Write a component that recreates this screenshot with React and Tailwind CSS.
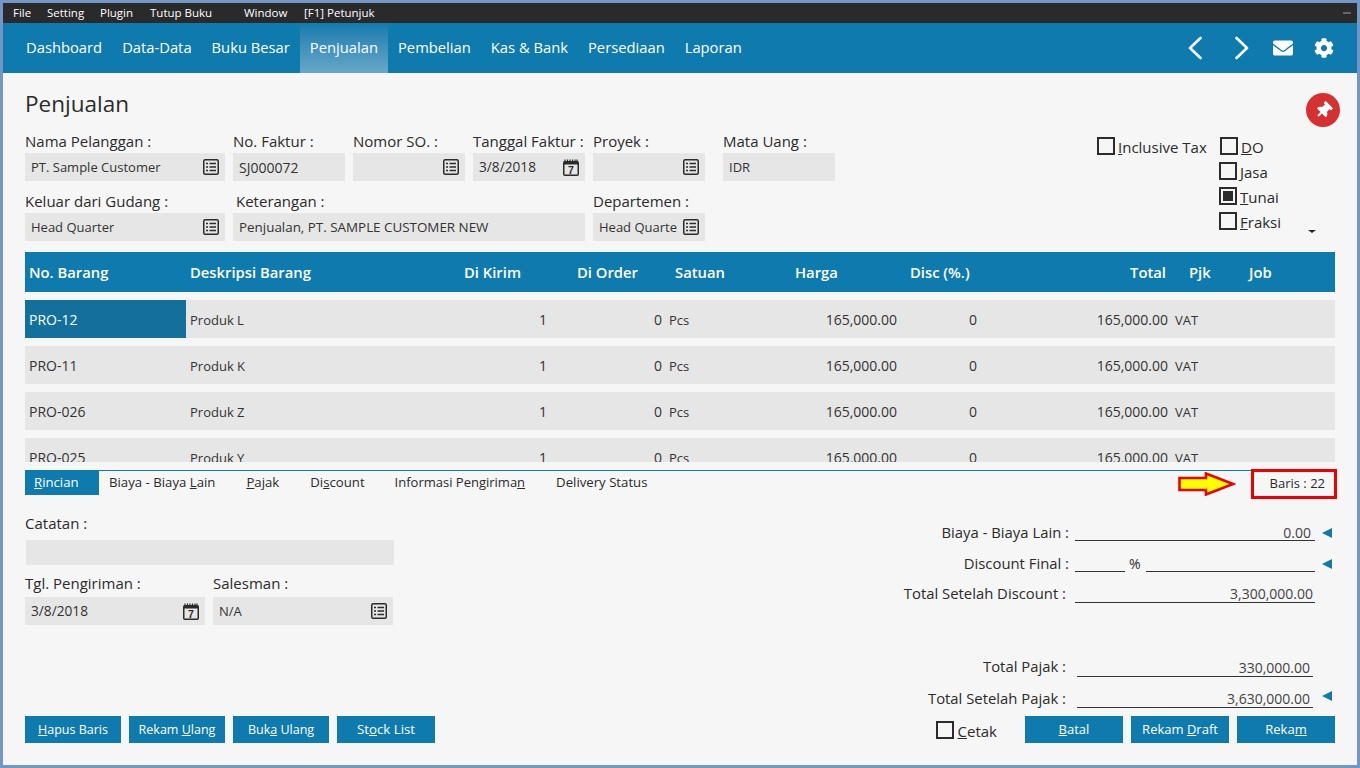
import { FaCog, FaEnvelope, FaThumbtack } from 'react-icons/fa';

const menuItems = [
  ['File', 'w-[34px]'],
  ['Setting', 'w-[53px]'],
  ['Plugin', 'w-[50px]'],
  ['Tutup Buku', 'w-[94px]'],
  ['Window', 'w-[60px]'],
  ['[F1] Petunjuk', 'w-[90px]'],
];
const navItems = ['Dashboard', 'Data-Data', 'Buku Besar', 'Penjualan', 'Pembelian', 'Kas & Bank', 'Persediaan', 'Laporan'];

const rows = [
  ['PRO-12', 'Produk L'],
  ['PRO-11', 'Produk K'],
  ['PRO-026', 'Produk Z'],
  ['PRO-025', 'Produk Y'],
];

function ListIcon() {
  return (
    <svg width="16" height="16" viewBox="0 0 16 16" className="shrink-0 text-[#2b2b2b]">
      <rect x="0.75" y="0.75" width="14.5" height="14.5" rx="1.5" fill="none" stroke="currentColor" strokeWidth="1.5" />
      <path d="M3 4.5h2M6.5 4.5h6.5M3 8h2M6.5 8h6.5M3 11.5h2M6.5 11.5h6.5" stroke="currentColor" strokeWidth="1.6" />
    </svg>
  );
}

function CalendarIcon() {
  return (
    <svg width="16" height="17" viewBox="0 0 16 17" className="shrink-0 text-[#2b2b2b]">
      <path d="M2 0.5v2M4.5 0.5v2M7 0.5v2M9.5 0.5v2M12 0.5v2M14 0.5v2" stroke="currentColor" strokeWidth="1.2" />
      <rect x="0.75" y="2.75" width="14.5" height="13.5" rx="1" fill="none" stroke="currentColor" strokeWidth="1.5" />
      <path d="M1 3h14v2.5H1z" fill="currentColor" />
      <text x="8" y="14.8" textAnchor="middle" fontSize="10.5" fontWeight="700" fill="currentColor" fontFamily="'Liberation Sans', sans-serif">7</text>
    </svg>
  );
}

function Chevron({ d }) {
  return (
    <svg width="14" height="24" viewBox="0 0 14 24" fill="none" stroke="currentColor" strokeWidth="2.6" strokeLinecap="round" strokeLinejoin="round">
      <path d={d} />
    </svg>
  );
}

function Field({ label, value, icon, className, labelClass = 'h-[21px] leading-[18px]', textClass = 'pt-[2px] text-[13px]' }) {
  return (
    <div className={className}>
      <div className={`whitespace-nowrap text-[15px] ${labelClass}`}>{label}</div>
      <div className="flex h-[28px] items-center justify-between bg-[#e6e6e6] px-[6px]">
        <span className={`overflow-hidden whitespace-nowrap text-[#333] ${textClass}`}>{value}</span>
        {icon === 'list' && <ListIcon />}
        {icon === 'cal' && <CalendarIcon />}
      </div>
    </div>
  );
}

function Check({ children, checked, className = '' }) {
  return (
    <div className={`flex h-[25px] items-center gap-[3px] text-[15px] ${className}`}>
      <span className="flex h-[18px] w-[18px] shrink-0 items-center justify-center border-2 border-[#2b2b2b]">
        {checked && <span className="h-[10px] w-[10px] bg-[#2b2b2b]" />}
      </span>
      <span className="pt-[3px]">{children}</span>
    </div>
  );
}

function ActionButton({ children, className = 'w-[96px] pt-[2px] text-[12.5px]' }) {
  return (
    <button type="button" className={`h-[27px] bg-[#0f7aae] text-white ${className}`}>
      {children}
    </button>
  );
}

function Triangle({ className = '' }) {
  return <span className={`h-0 w-0 border-y-[5px] border-r-[10px] border-y-transparent border-r-[#0f7aae] ${className}`} />;
}

function Summary({ label, value, arrow, labelClass = 'w-[1063px] leading-[19px]', lineClass = 'ml-[9px] w-[240px] pr-[2px] pt-[5px]' }) {
  return (
    <div className="flex h-[31px] items-end">
      <div className={`text-right text-[14.85px] ${labelClass}`}>{label}</div>
      <div className={`h-[24px] border-b border-[#333] text-right text-[14px] leading-[19px] text-[#444] ${lineClass}`}>{value}</div>
      {arrow}
    </div>
  );
}

export default function App() {
  return (
    <div
      className="flex h-screen flex-col overflow-hidden border-[3px] border-[#7396c4] bg-[#f6f6f6] text-[#2b2b2b]"
      style={{ fontFamily: "'Open Sans', 'Noto Sans', sans-serif" }}
    >
      {/* Window menu */}
      <div className="flex h-[20px] shrink-0 items-center bg-[#2a2a2a] pl-[10px] pr-[6px] text-[11.5px] text-white">
        {menuItems.map(([name, width]) => (
          <span key={name} className={`${width} whitespace-nowrap`}>
            {name}
          </span>
        ))}
        <span className="ml-auto h-[2px] w-[8px] bg-[#666]" />
      </div>

      {/* Main nav */}
      <nav className="flex h-[50px] shrink-0 items-stretch bg-[#0f7aae] pl-[13px] pr-[23px] text-[14.75px] text-white">
        {navItems.map((item) => (
          <span
            key={item}
            className={`flex items-center px-[10px] pb-[2px] ${item === 'Penjualan' ? 'bg-gradient-to-b from-[#0f7aae] to-[#66a8c9]' : ''}`}
          >
            {item}
          </span>
        ))}
        <div className="ml-auto flex items-center">
          <Chevron d="M12.5 2 L2 12 L12.5 22" />
          <span className="ml-[33px]"><Chevron d="M1.5 2 L12 12 L1.5 22" /></span>
          <FaEnvelope size={20} className="ml-[24px]" />
          <FaCog size={20} className="ml-[21px]" />
        </div>
      </nav>

      {/* Header form */}
      <section className="relative flex h-[179px] shrink-0 justify-between px-[22px]">
        <div>
          <h1 className="mt-[15px] h-[44px] text-[22.5px] leading-[32px]">Penjualan</h1>
          <div className="flex gap-[8px]">
            <Field className="w-[200px]" label="Nama Pelanggan :" value="PT. Sample Customer" icon="list" />
            <Field className="w-[112px]" label="No. Faktur :" value="SJ000072" textClass="text-[14px]" />
            <Field className="w-[112px]" label="Nomor SO. :" value="" icon="list" />
            <Field className="w-[112px]" label="Tanggal Faktur :" value="3/8/2018" icon="cal" textClass="text-[13.7px]" />
            <Field className="w-[112px]" label="Proyek :" value="" icon="list" />
            <Field className="ml-[10px] w-[112px]" label="Mata Uang :" value="IDR" />
          </div>
          <div className="mt-[11px] flex gap-[8px]">
            <Field className="w-[200px]" label="Keluar dari Gudang :" value="Head Quarter" icon="list" />
            <Field
              className="w-[352px]"
              labelClass="h-[21px] pl-[3px] leading-[18px]"
              label="Keterangan :"
              value="Penjualan, PT. SAMPLE CUSTOMER NEW"
              textClass="text-[13.4px]"
            />
            <Field className="w-[112px]" label="Departemen :" value="Head Quarte" icon="list" />
          </div>
        </div>

        <div className="flex flex-col items-end">
          <span className="mr-[-5px] mt-[20px] flex h-[34px] w-[34px] items-center justify-center rounded-full bg-[#d63031] text-white">
            <FaThumbtack size={17} className="rotate-45" />
          </span>
          <div className="mt-[6px] flex w-[238px]">
            <Check className="w-[122px]"><u>I</u>nclusive Tax</Check>
            <div>
              <Check className="ml-[1px]"><u>D</u>O</Check>
              <Check><u>J</u>asa</Check>
              <Check checked><u>T</u>unai</Check>
              <Check><u>F</u>raksi</Check>
            </div>
            <span className="ml-auto mr-[19px] mt-[97px] h-0 w-0 border-x-[4px] border-t-[3px] border-x-transparent border-t-[#222]" />
          </div>
        </div>
      </section>

      {/* Item table */}
      <section className="mx-[22px] mb-[8px] h-[210px] shrink-0 overflow-hidden">
        <div className="grid h-[40px] grid-cols-[161px_250px_89px_117px_149px_115px_164px_100px_75px_90px] items-center bg-[#0f7aae] text-[14.8px] font-semibold text-white">
          <span className="pl-[4px]">No. Barang</span>
          <span className="pl-[4px]">Deskripsi Barang</span>
          <span className="pr-[4px] text-right">Di Kirim</span>
          <span className="pr-[4px] text-right">Di Order</span>
          <span className="pl-[33px]">Satuan</span>
          <span className="pl-[4px]">Harga</span>
          <span className="pl-[4px]">Disc (%.)</span>
          <span className="pr-[4px] text-right">Total</span>
          <span className="pl-[19px]">Pjk</span>
          <span className="pl-[4px]">Job</span>
        </div>
        {rows.map(([code, name], i) => (
          <div
            key={code}
            className="mt-[8px] grid h-[38px] grid-cols-[161px_250px_115px_115px_120px_115px_80px_191px_163px] items-center bg-[#e6e6e6] text-[13px] text-[#333]"
          >
            <span className={`flex h-full items-center pl-[4px] text-[14px] ${i === 0 ? 'bg-[#136f9c] text-white' : ''}`}>{code}</span>
            <span className="pl-[4px] pt-[4px]">{name}</span>
            <span className="pr-[4px] text-right text-[14px]">1</span>
            <span className="pr-[4px] text-right text-[14px]">0</span>
            <span className="pl-[3px] pt-[4px]">Pcs</span>
            <span className="pr-[4px] text-right text-[14px]">165,000.00</span>
            <span className="pr-[4px] text-right text-[14px]">0</span>
            <span className="pr-[4px] text-right text-[14px]">165,000.00</span>
            <span className="pl-[3px] pt-[4px]">VAT</span>
          </div>
        ))}
      </section>

      {/* Tabs */}
      <div className="relative mx-[22px] flex h-[26px] shrink-0 items-start border-t border-[#0f7aae] text-[13.2px]">
        <span className="flex h-[24px] w-[74px] items-center bg-[#0f7aae] pl-[9px] text-white"><span><u>R</u>incian</span></span>
        <span className="ml-[10px] mt-[2px]">Biaya - Biaya <u>L</u>ain</span>
        <span className="ml-[31px] mt-[2px]"><u>P</u>ajak</span>
        <span className="ml-[31px] mt-[2px]">Di<u>s</u>count</span>
        <span className="ml-[30px] mt-[2px] text-[13px]">Informasi Pengirima<u>n</u></span>
        <span className="ml-[31px] mt-[2px]">Delivery Status</span>

        {/* Annotation drawn over the screenshot */}
        <svg width="58" height="24" viewBox="0 0 58 24" className="absolute left-[1153px] top-[1px]">
          <path d="M1.5 6H28V1.5L55 12 28 22.5V18H1.5z" fill="#ffff00" stroke="#ee0000" strokeWidth="2.6" />
        </svg>
        <div className="absolute left-[1226px] top-[-2px] flex h-[30px] w-[86px] items-center justify-end border-[3px] border-[#ee0000] pr-[9px] text-[13px]">
          Baris : 22
        </div>
      </div>

      {/* Lower form */}
      <section className="relative flex flex-1 flex-col">
        <div className="absolute left-[22px] top-[17px] w-[369px]">
          <div className="h-[20px] text-[15px] leading-[20px]">Catatan :</div>
          <div className="ml-[1px] mt-[7px] h-[25px] bg-[#e6e6e6]" />
          <div className="mt-[8px] flex gap-[8px]">
            <Field className="w-[180px]" labelClass="h-[24px] leading-[20px]" label="Tgl. Pengiriman :" value="3/8/2018" icon="cal" textClass="text-[13.7px]" />
            <Field className="w-[180px]" labelClass="h-[24px] leading-[20px]" label="Salesman :" value="N/A" icon="list" />
          </div>
        </div>

        <div className="mt-[14px]">
          <Summary
            label="Biaya - Biaya Lain :"
            value="0.00"
            labelClass="w-[1066px] leading-[17px]"
            lineClass="ml-[6px] w-[240px] pr-[4px] pt-[6px]"
            arrow={<Triangle className="mb-[3px] ml-[7px]" />}
          />
          <div className="flex h-[31px] items-end">
            <div className="w-[1066px] text-right text-[14.85px] leading-[17px]">Discount Final :</div>
            <div className="ml-[6px] h-[24px] w-[50px] border-b border-[#333]" />
            <span className="mx-[4px] text-[14px] leading-[16px]">%</span>
            <div className="ml-[1px] h-[24px] w-[169px] border-b border-[#333]" />
            <Triangle className="mb-[3px] ml-[7px]" />
          </div>
          <Summary label="Total Setelah Discount :" value="3,300,000.00" />
          <div className="h-[43px]" />
          <Summary
            label="Total Pajak :"
            value="330,000.00"
            labelClass="w-[1063px] leading-[21px]"
            lineClass="ml-[11px] w-[236px] pr-[3px] pt-[5px]"
          />
          <Summary
            label="Total Setelah Pajak :"
            value="3,630,000.00"
            lineClass="ml-[11px] w-[236px] pr-[3px] pt-[5px]"
            arrow={<Triangle className="mb-[7px] ml-[9px]" />}
          />
        </div>

        <div className="mb-[22px] mt-auto flex items-center px-[22px]">
          <div className="flex gap-[8px]">
            <ActionButton><u>H</u>apus Baris</ActionButton>
            <ActionButton>Rekam <u>U</u>lang</ActionButton>
            <ActionButton>Buk<u>a</u> Ulang</ActionButton>
            <ActionButton className="w-[98px] text-[13.3px]">St<u>o</u>ck List</ActionButton>
          </div>
          <Check className="ml-auto mr-[28px]"><span className="ml-[1px]"><u>C</u>etak</span></Check>
          <div className="flex gap-[8px]">
            <ActionButton className="w-[98px] text-[13px]"><u>B</u>atal</ActionButton>
            <ActionButton className="w-[98px] text-[13px]">Rekam <u>D</u>raft</ActionButton>
            <ActionButton className="w-[98px] text-[13px]">Reka<u>m</u></ActionButton>
          </div>
        </div>
      </section>
    </div>
  );
}
